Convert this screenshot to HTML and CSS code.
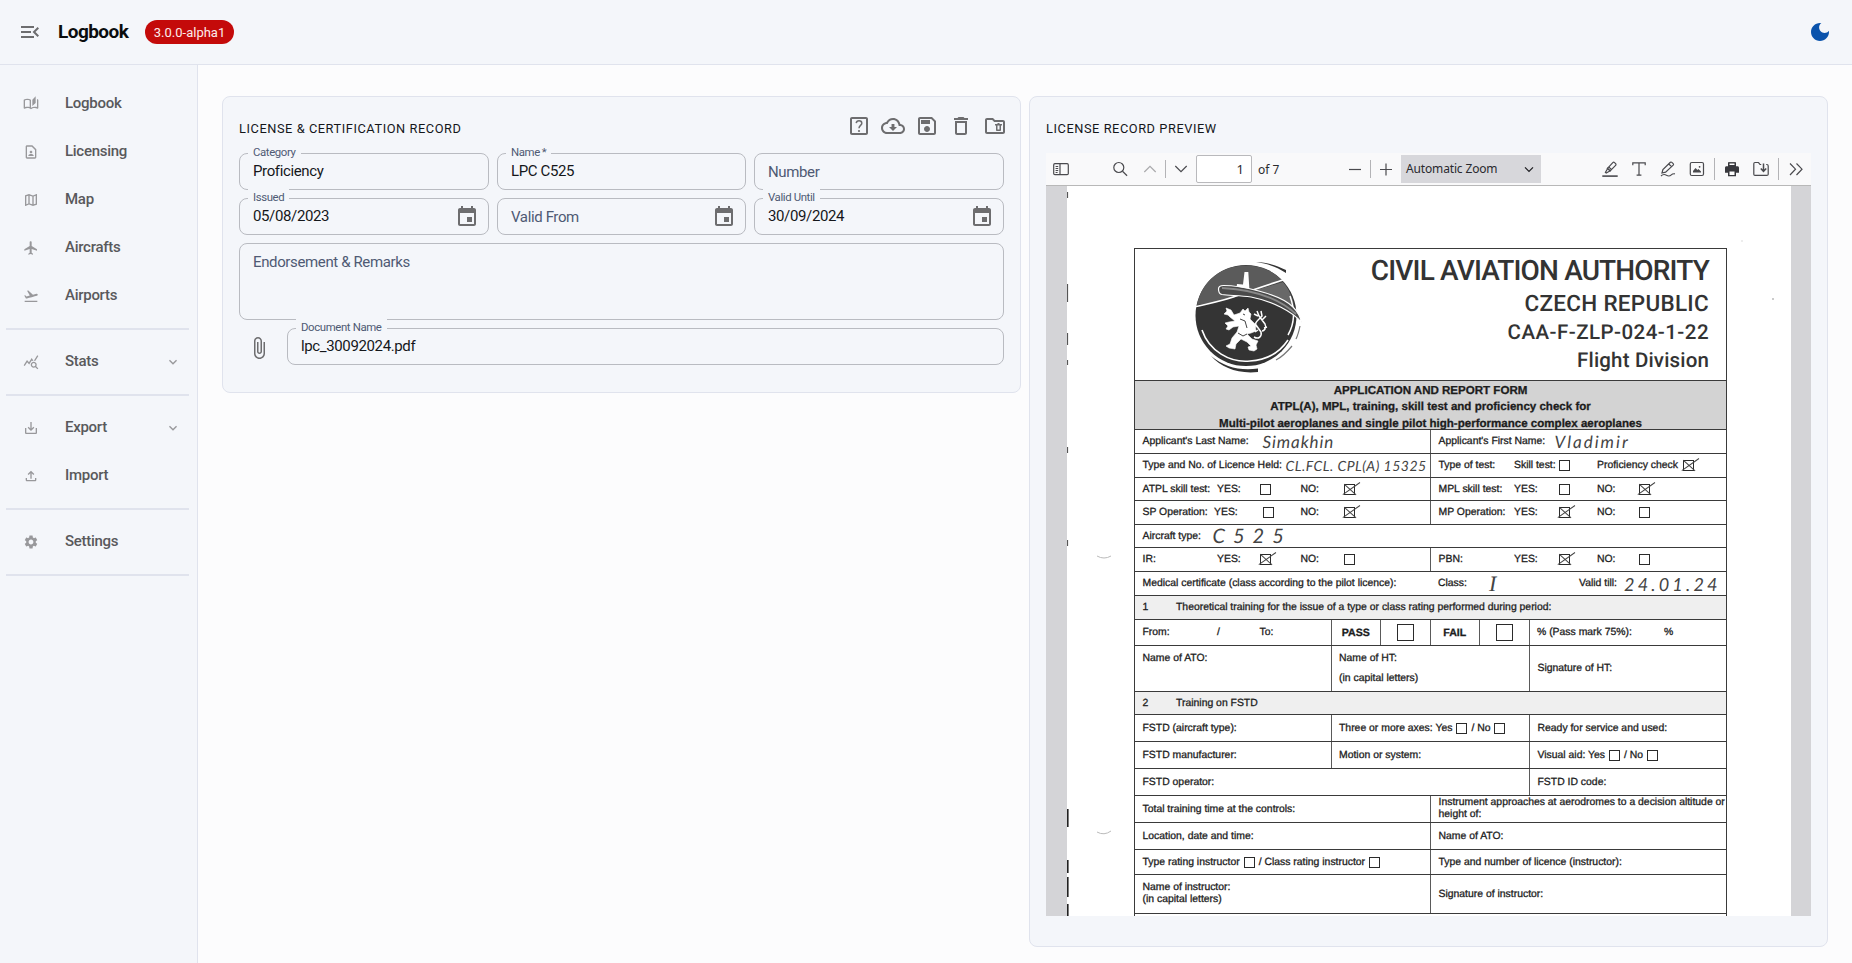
FILE: index.html
```html
<!DOCTYPE html>
<html lang="en">
<head>
<meta charset="utf-8">
<title>Logbook</title>
<link rel="stylesheet" href="styles.css">
</head>
<body>
<header class="topbar">
  <svg class="ic24 menu-toggle" viewBox="0 0 24 24"><path d="M3 18h13v-2H3v2zM3 13h10v-2H3v2zm0-7v2h13V6H3zm18 9.59L17.42 12 21 8.41 19.59 7l-5 5 5 5L21 15.59z"/></svg>
  <span class="brand">Logbook</span>
  <span class="chip">3.0.0-alpha1</span>
  <svg class="ic24 moon" viewBox="0 0 24 24"><path d="M12 3c-4.97 0-9 4.03-9 9s4.03 9 9 9 9-4.03 9-9c0-.46-.04-.92-.1-1.36-.98 1.37-2.58 2.26-4.4 2.26-2.98 0-5.4-2.42-5.4-5.4 0-1.81.89-3.42 2.26-4.4-.44-.06-.9-.1-1.36-.1z"/></svg>
</header>
<div class="shell">
  <nav class="sidebar">
    <a class="nav-item"><svg viewBox="0 0 24 24"><path d="M22.47 5.2c-.47-.24-.96-.44-1.47-.61v12.03c-1.14-.41-2.31-.62-3.5-.62-1.9 0-3.78.54-5.5 1.58V5.48C10.38 4.55 8.51 4 6.5 4c-1.79 0-3.48.44-4.97 1.2-.33.16-.53.51-.53.88v12.08c0 .58.47.99 1 .99.16 0 .32-.04.48-.12C3.69 18.4 5.05 18 6.5 18c2.07 0 3.98.82 5.5 2 1.52-1.18 3.43-2 5.5-2 1.45 0 2.81.4 4.02 1.04.16.08.32.12.48.12.52 0 1-.41 1-.99V6.08c0-.37-.2-.72-.53-.88zM10 16.62C8.86 16.21 7.69 16 6.5 16c-1.19 0-2.36.21-3.5.62V6.71C4.11 6.24 5.28 6 6.5 6c1.2 0 2.39.25 3.5.72v9.9zM19 .5l-5 5V15l5-4.5V.5z"/></svg><span>Logbook</span></a>
    <a class="nav-item"><svg viewBox="0 0 24 24"><path d="M13.17 4 18 8.83V20H6V4h7.17M14 2H6c-1.1 0-2 .9-2 2v16c0 1.1.9 2 2 2h12c1.1 0 2-.9 2-2V8l-6-6zm-2 12c1.1 0 2-.9 2-2s-.9-2-2-2-2 .9-2 2 .9 2 2 2zm4 3.43c0-.81-.48-1.53-1.22-1.85-.85-.37-1.79-.58-2.78-.58-.99 0-1.93.21-2.78.58C8.48 15.9 8 16.62 8 17.43V18h8v-.57z"/></svg><span>Licensing</span></a>
    <a class="nav-item"><svg viewBox="0 0 24 24"><path d="M20.5 3l-.16.03L15 5.1 9 3 3.36 4.9c-.21.07-.36.25-.36.48V20.5c0 .28.22.5.5.5l.16-.03L9 18.9l6 2.1 5.64-1.9c.21-.07.36-.25.36-.48V3.5c0-.28-.22-.5-.5-.5zM10 5.47l4 1.4v11.66l-4-1.4V5.47zm-5 .99l3-1.01v11.7l-3 1.16V6.46zm14 11.08l-3 1.01V6.86l3-1.16v11.84z"/></svg><span>Map</span></a>
    <a class="nav-item"><svg viewBox="0 0 24 24"><path d="M21 16v-2l-8-5V3.5c0-.83-.67-1.5-1.5-1.5S10 2.67 10 3.5V9l-8 5v2l8-2.5V19l-2 1.5V22l3.5-1 3.5 1v-1.5L13 19v-5.5l8 2.5z"/></svg><span>Aircrafts</span></a>
    <a class="nav-item"><svg viewBox="0 0 24 24"><path d="M2.5 19h19v2h-19v-2zm19.57-9.36c-.21-.8-1.04-1.28-1.84-1.06L14.92 10l-6.9-6.43-1.93.51 4.14 7.17-4.97 1.33-1.97-1.54-1.45.39 2.59 4.49s7.12-1.9 16.57-4.43c.81-.23 1.28-1.05 1.07-1.85z"/></svg><span>Airports</span></a>
    <hr>
    <a class="nav-item"><svg viewBox="0 0 24 24"><path d="M19.88 18.47c.44-.7.7-1.51.7-2.39 0-2.49-2.01-4.5-4.5-4.5s-4.5 2.01-4.5 4.5 2.01 4.5 4.49 4.5c.88 0 1.7-.26 2.39-.7L21.58 23 23 21.58l-3.12-3.11zm-3.8.11c-1.38 0-2.5-1.12-2.5-2.5s1.12-2.5 2.5-2.5 2.5 1.12 2.5 2.5-1.12 2.5-2.5 2.5zm-.36-8.5c-.74.02-1.45.18-2.1.45l-.55-.83-3.8 6.18-3.01-3.52-3.63 5.81L1 17l5-8 3 3.5L13 6l2.72 4.08zm2.59.5c-.64-.28-1.33-.45-2.05-.49L21.38 2 23 3.18l-4.69 7.4z"/></svg><span>Stats</span><svg class="chev" viewBox="0 0 24 24"><path d="M16.59 8.59 12 13.17 7.41 8.59 6 10l6 6 6-6z"/></svg></a>
    <hr>
    <a class="nav-item"><svg viewBox="0 0 24 24"><path d="M19 12v7H5v-7H3v7c0 1.1.9 2 2 2h14c1.1 0 2-.9 2-2v-7h-2zm-6 .67l2.59-2.58L17 11.5l-5 5-5-5 1.41-1.41L11 12.67V3h2v9.67z"/></svg><span>Export</span><svg class="chev" viewBox="0 0 24 24"><path d="M16.59 8.59 12 13.17 7.41 8.59 6 10l6 6 6-6z"/></svg></a>
    <a class="nav-item"><svg viewBox="0 0 24 24"><path d="M18 15v3H6v-3H4v3c0 1.1.9 2 2 2h12c1.1 0 2-.9 2-2v-3h-2zM7 9l1.41 1.41L11 7.83V16h2V7.83l2.59 2.58L17 9l-5-5-5 5z"/></svg><span>Import</span></a>
    <hr>
    <a class="nav-item"><svg viewBox="0 0 24 24"><path d="M19.14 12.94c.04-.3.06-.61.06-.94 0-.32-.02-.64-.07-.94l2.03-1.58c.18-.14.23-.41.12-.61l-1.92-3.32c-.12-.22-.37-.29-.59-.22l-2.39.96c-.5-.38-1.03-.7-1.62-.94l-.36-2.54c-.04-.24-.24-.41-.48-.41h-3.84c-.24 0-.43.17-.47.41l-.36 2.54c-.59.24-1.13.57-1.62.94l-2.39-.96c-.22-.08-.47 0-.59.22L2.74 8.87c-.12.21-.08.47.12.61l2.03 1.58c-.05.3-.09.63-.09.94s.02.64.07.94l-2.03 1.58c-.18.14-.23.41-.12.61l1.92 3.32c.12.22.37.29.59.22l2.39-.96c.5.38 1.03.7 1.62.94l.36 2.54c.05.24.24.41.48.41h3.84c.24 0 .44-.17.47-.41l.36-2.54c.59-.24 1.13-.56 1.62-.94l2.39.96c.22.08.47 0 .59-.22l1.92-3.32c.12-.22.07-.47-.12-.61l-2.01-1.58zM12 15.6c-1.98 0-3.6-1.62-3.6-3.6s1.62-3.6 3.6-3.6 3.6 1.62 3.6 3.6-1.62 3.6-3.6 3.6z"/></svg><span>Settings</span></a>
    <hr>
  </nav>
  <main class="content">
    <section class="card record">
      <div class="card-head">
        <h2>LICENSE &amp; CERTIFICATION RECORD</h2>
        <div class="actions">
          <svg class="ic24" viewBox="0 0 24 24"><path d="M19 3H5c-1.1 0-2 .9-2 2v14c0 1.1.9 2 2 2h14c1.1 0 2-.9 2-2V5c0-1.1-.9-2-2-2zm0 16H5V5h14v14z"/><circle cx="12" cy="17" r="1.1"/><path d="M9.2 9.1C9.4 7.600 10.500 6.700 12 6.700c1.600 0 2.800 1 2.800 2.500 0 2.200-2.800 2.300-2.800 5" fill="none" stroke="#6d6d6f" stroke-width="1.500"/></svg>
          <svg class="ic24" viewBox="0 0 24 24"><path d="M19.35 10.04C18.67 6.59 15.64 4 12 4 9.11 4 6.6 5.64 5.35 8.04 2.34 8.36 0 10.91 0 14c0 3.310 2.690 6 6 6h13c2.760 0 5-2.240 5-5 0-2.640-2.050-4.780-4.650-4.960zM19 18H6c-2.210 0-4-1.790-4-4 0-2.050 1.530-3.760 3.560-3.970l1.070-.11.5-.95C8.080 7.140 9.940 6 12 6c2.620 0 4.880 1.860 5.390 4.430l.3 1.500 1.530.11c1.560.1 2.780 1.410 2.780 2.960 0 1.650-1.350 3-3 3zm-5.550-8h-2.900v3H8l4 4 4-4h-2.550z"/></svg>
          <svg class="ic24" viewBox="0 0 24 24"><path d="M17 3H5c-1.110 0-2 .9-2 2v14c0 1.100.89 2 2 2h14c1.100 0 2-.9 2-2V7l-4-4zm2 16H5V5h11.170L19 7.830V19zm-7-7c-1.660 0-3 1.340-3 3s1.340 3 3 3 3-1.340 3-3-1.340-3-3-3zM6 6h9v4H6z"/></svg>
          <svg class="ic24" viewBox="0 0 24 24"><path d="M16 9v10H8V9h8m-1.500-6h-5l-1 1H5v2h14V4h-3.500l-1-1zM18 7H6v12c0 1.100.9 2 2 2h8c1.100 0 2-.9 2-2V7z"/></svg>
          <svg class="ic24" viewBox="0 0 24 24"><path d="M20 6h-8l-2-2H4c-1.100 0-2 .9-2 2v12c0 1.100.9 2 2 2h16c1.100 0 2-.9 2-2V8c0-1.100-.9-2-2-2zm0 12H4V6h5.170l2 2H20v10z"/><path d="M16.500 9h-2v1H12v1.500h1V16c0 .550.45 1 1 1h3c.55 0 1-.45 1-1v-4.500h1V10h-2.500V9zm0 6.500h-2v-4h2v4z"/></svg>
        </div>
      </div>
      <div class="grid3">
        <div class="field"><label>Category</label><span>Proficiency</span></div>
        <div class="field"><label>Name&thinsp;*</label><span>LPC C525</span></div>
        <div class="field empty"><span>Number</span></div>
        <div class="field"><label>Issued</label><span>05/08/2023</span><svg class="ic24" viewBox="0 0 24 24"><path d="M17 12h-5v5h5v-5zM16 1v2H8V1H6v2H5c-1.110 0-1.990.9-1.990 2L3 19c0 1.100.89 2 2 2h14c1.100 0 2-.9 2-2V5c0-1.100-.9-2-2-2h-1V1h-2zm3 18H5V8h14v11z"/></svg></div>
        <div class="field empty"><span>Valid From</span><svg class="ic24" viewBox="0 0 24 24"><path d="M17 12h-5v5h5v-5zM16 1v2H8V1H6v2H5c-1.110 0-1.990.9-1.990 2L3 19c0 1.100.89 2 2 2h14c1.100 0 2-.9 2-2V5c0-1.100-.9-2-2-2h-1V1h-2zm3 18H5V8h14v11z"/></svg></div>
        <div class="field"><label>Valid Until</label><span>30/09/2024</span><svg class="ic24" viewBox="0 0 24 24"><path d="M17 12h-5v5h5v-5zM16 1v2H8V1H6v2H5c-1.110 0-1.990.9-1.990 2L3 19c0 1.100.89 2 2 2h14c1.100 0 2-.9 2-2V5c0-1.100-.9-2-2-2h-1V1h-2zm3 18H5V8h14v11z"/></svg></div>
      </div>
      <div class="field empty remarks"><span>Endorsement &amp; Remarks</span></div>
      <div class="doc-row">
        <svg class="ic24" viewBox="0 0 24 24"><path d="M16.500 6v11.500c0 2.210-1.790 4-4 4s-4-1.790-4-4V5c0-1.380 1.120-2.500 2.500-2.500s2.500 1.120 2.500 2.500v10.500c0 .55-.45 1-1 1s-1-.45-1-1V6H10v9.500c0 1.380 1.120 2.500 2.500 2.500s2.500-1.120 2.500-2.500V5c0-2.210-1.790-4-4-4S7 2.790 7 5v12.500c0 3.040 2.460 5.500 5.500 5.500s5.500-2.460 5.500-5.500V6h-1.500z"/></svg>
        <div class="field"><label>Document Name</label><span>lpc_30092024.pdf</span></div>
      </div>
    </section>

    <section class="card preview">
      <div class="card-head"><h2>LICENSE RECORD PREVIEW</h2></div>
      <div class="viewer">
        <div class="toolbar">
          <svg class="tb i-side" viewBox="0 0 16 16"><rect x=".7" y="2.700" width="14.600" height="11" rx="1.200"/><path d="M7 2.700v11M2.600 5.500h2.600M2.600 7.500h2.600M2.600 9.500h2.600M2.600 11.500h2"/></svg>
          <svg class="tb i-find" viewBox="0 0 16 16"><circle cx="6.800" cy="6.500" r="5"/><path d="m10.500 10.300 4.600 4.500"/></svg>
          <svg class="tb i-up" viewBox="0 0 16 16"><path d="m2.300 11 5.700-5.700 5.700 5.700"/></svg>
          <i class="sep s1"></i>
          <svg class="tb i-down" viewBox="0 0 16 16"><path d="m2.300 5 5.700 5.700L13.700 5"/></svg>
          <span class="pagebox">1</span>
          <span class="of">of 7</span>
          <svg class="tb i-minus" viewBox="0 0 16 16"><path d="M2 8.500h12"/></svg>
          <i class="sep s2"></i>
          <svg class="tb i-plus" viewBox="0 0 16 16"><path d="M2 8.500h12M8 2.500v12"/></svg>
          <span class="zoom">Automatic Zoom<svg class="tb i-sel" viewBox="0 0 16 16"><path d="m4 6.300 4 4 4-4"/></svg></span>
          <svg class="tb i-hl" viewBox="0 0 16 16"><path d="M.3 15.100h15.400" stroke-width="1.600"/><path d="m5.500 7.300 5.300-5.700c.5-.5 1.200-.5 1.700 0l1.100 1.100c.5.500.5 1.200 0 1.700L8.100 9.900z"/><path d="M5.500 7.300 4.800 9 3.400 11.400l.8.600 2.300-1.300 1.600-.8z"/><path d="m6.900 6.100 2.800 2.700"/></svg>
          <svg class="tb i-text" viewBox="0 0 16 16"><path d="M1.800 4.200V1.800h12.400v2.400M8 1.800v12.400M5.600 14.200h4.800"/></svg>
          <svg class="tb i-ink" viewBox="0 0 16 16"><path d="M2 12l.9-3.500L10.400 1.300c.4-.4 1-.4 1.400 0l1.400 1.400c.4.400.4 1 0 1.400L5.600 11.200zM8.800 3l2.700 2.600"/><path d="M1 15c2-2 3.500-2 5.500-.700 2 1.200 3.500.8 4.800-.500 1-1 2-1.200 3.700-1"/></svg>
          <svg class="tb i-img" viewBox="0 0 16 16"><rect x="1.300" y="1.500" width="13.200" height="13" rx="1.500"/><path d="M4 11.500V10l2.500-3 2 2 1-1 2.500 2.500v1z" fill="#4a4a4e" stroke="none"/><circle cx="10.600" cy="5.800" r=".9" fill="#4a4a4e" stroke="none"/></svg>
          <i class="sep s3"></i>
          <svg class="tb i-print" viewBox="0 0 16 16"><path d="M4 1.200h8v4h1.500c.9 0 1.500.6 1.500 1.500v5H12v3.500H4v-3.500H1v-5c0-.9.6-1.500 1.500-1.500H4z" fill="#38383d" stroke="none"/><path d="M5 2h6v2.500H5zM5 10h6v4.500H5z" fill="#fff" stroke="#38383d" stroke-width="1"/></svg>
          <svg class="tb i-dl" viewBox="0 0 16 16"><path d="M6 2.200 5.400 1.500H2C1.300 1.500.8 2 .8 2.700v10.500c0 .7.500 1.200 1.200 1.200h11.800c.8 0 1.400-.5 1.400-1.200V5c0-1-.6-1.500-1.400-1.500h-.6M6 2.200l1 1.300h1.200"/><path d="M10.500 2.500V10M7.800 7.500l2.700 2.800 2.700-2.800" stroke-width="1.500"/></svg>
          <i class="sep s4"></i>
          <svg class="tb i-more" viewBox="0 0 16 16"><path d="m2 2.500 5.500 5.700L2 14M8.500 2.500 14 8.200 8.500 14"/></svg>
        </div>
        <div class="canvas">
          <div class="page">
            <svg class="scan-marks" viewBox="0 0 724 730"><path d="M.5 6v6M.5 98v18M.5 147v12M.5 174v5M.5 261v6M.5 354v6" stroke="#555" stroke-width="1.200"/><path d="M.8 623v18M.8 674v13M.8 691v20M.8 718v12" stroke="#222" stroke-width="1.600"/><path d="M30 370q7 4 14 0M30 646q7 4 14-1" fill="none" stroke="#bbb"/><circle cx="706" cy="113" r=".8" fill="#888"/><circle cx="675" cy="55" r=".7" fill="#ccc"/></svg>
            <div class="form">
              <div class="row r-title">
                <svg class="emblem" viewBox="0 0 110 118">
                  <circle cx="51" cy="57.500" r="50.500" fill="#343434"/>
                  <path d="M2 47C7 22 27 7.500 51 7.500c15 0 28 6 37 16L53 34C36 42 19 44 2 47z" fill="#5b5b5b"/>
                  <path d="M53 34 88 24c6 7 10 16 11 24C86 42 70 37 53 34z" fill="#686868"/>
                  <path d="M1 48.500C16 45 30 42.500 44 37S74 26.500 88 22" fill="none" stroke="#fff" stroke-width="1.600"/>
                  <path d="M41.500 29.500 42 26l6 .5L49.500 14h3.800L54.500 33z" fill="#fff"/>
                  <path d="M95 38c5 14 5 27-2 39" fill="none" stroke="#fff" stroke-width="1.500"/>
                  <path d="M7 72c7 21 28 33 48 31 17-1 30-9 38-21" fill="none" stroke="#fff" stroke-width="1.600"/>
                  <path d="M23.500 31c0-2.500 2-3.500 5-3.500C44 27.500 84 35 98 49c5 5 7.500 10 8.500 15.500C98 54 77 43 56 39 44 37.500 34 37.500 27 36.500c-2.500-.5-3.500-2.500-3.500-5.500z" fill="#4a4a4a" stroke="#fff" stroke-width="1.200"/>
                  <path d="M27 30c22 1 52 6 74 26" fill="none" stroke="#888" stroke-width="1.800"/>
                  <path d="M61 4c11 0 22 4 30 8v3c-9-6-19-9.500-30-11z" fill="#333"/>
                  <path d="M16 98c13 11 29 15 47 12.500v3.500C43 116 27 110 16 98z" fill="#333"/>
                  <path d="M105 68c-1 5-2 9-4 13M97 88c-5 6-10 11-16 14" fill="none" stroke="#777" stroke-width="1.200"/>
                  <g fill="#fff" stroke="#fff" stroke-linejoin="round">
                    <path d="m45 55 3-4 2 2 3-3 1 4 2 2-1 5 5 5 1 7-5 2-4 1 5 5 6 2-2 4 1 4-3 2-5-1-1-3 3-1-4-4-6-3-5 5-1 5-6-1-3-2 4-2 2-6 5-6 2-6-6 1-4 3-3-1 2-3-3-3 4-1 6-1-5-4-2-2-4-1 3-3-1-3 5 2 3 5z" stroke-width=".6"/>
                    <path d="M59 79c5 3 8-1 7-5l-5-7c-2-3 3-5 6-9l-1-5M62 53l2 5 6 8c2 4-1 7-3 7M59 56l4 2M71 58l-4 4M59 66l3 3M72 69l-3 1M60 74l3-2" fill="none" stroke-width="1.500"/>
                  </g>
                  <path d="m45 61 5 2 2 7M43 75l5 3 4-2M48 56l2 1" fill="none" stroke="#444" stroke-width="1"/>
                </svg>
                <div class="authority">
                  <p class="a1">CIVIL AVIATION AUTHORITY</p>
                  <p class="a2">CZECH REPUBLIC</p>
                  <p class="a3">CAA-F-ZLP-024-1-22</p>
                  <p class="a4">Flight Division</p>
                </div>
              </div>
              <div class="row r-heading">
                <p class="h1">APPLICATION AND REPORT FORM</p>
                <p class="h2">ATPL(A), MPL, training, skill test and proficiency check for</p>
                <p class="h3">Multi-pilot aeroplanes and single pilot high-performance complex aeroplanes</p>
              </div>
              <div class="row h24 half"><div class="cell"><span class="lbl-name">Applicant's Last Name:</span><span class="ink ink-last">Simakhin</span></div><div class="cell"><span class="lbl-first">Applicant's First Name:</span><span class="ink ink-first">Vladimir</span></div></div>
              <div class="row h24 half"><div class="cell"><span class="lbl-lic">Type and No. of Licence Held:</span><span class="ink ink-lic">CL.FCL. CPL(A) 15325</span></div><div class="cell rt"><span class="s-label">Type of test:</span><span class="s-yes">Skill test:</span><span class="s-box"><i class="box"></i></span><span class="s-prof">Proficiency check</span><i class="box x"></i></div></div>
              <div class="row h23 half"><div class="cell"><span class="s-label">ATPL skill test:</span><span class="s-yes">YES:</span><span class="s-box"><i class="box"></i></span><span class="s-no">NO:</span><i class="box x"></i></div><div class="cell rt"><span class="s-label">MPL skill test:</span><span class="s-yes">YES:</span><span class="s-box"><i class="box"></i></span><span class="s-no">NO:</span><i class="box x"></i></div></div>
              <div class="row h24 half"><div class="cell"><span class="s-label sp">SP Operation:</span><span class="s-yes sp">YES:</span><span class="s-box sp"><i class="box"></i></span><span class="s-no">NO:</span><i class="box x"></i></div><div class="cell rt"><span class="s-label">MP Operation:</span><span class="s-yes">YES:</span><span class="s-box"><i class="box x"></i></span><span class="s-no">NO:</span><i class="box"></i></div></div>
              <div class="row h23"><div class="cell"><span class="lbl-type">Aircraft type:</span><span class="ink ink-type">C525</span></div></div>
              <div class="row h24 half"><div class="cell"><span class="s-label">IR:</span><span class="s-yes">YES:</span><span class="s-box"><i class="box x"></i></span><span class="s-no">NO:</span><i class="box"></i></div><div class="cell rt"><span class="s-label">PBN:</span><span class="s-yes">YES:</span><span class="s-box"><i class="box x"></i></span><span class="s-no">NO:</span><i class="box"></i></div></div>
              <div class="row h24"><div class="cell"><span class="m-cert">Medical certificate (class according to the pilot licence):</span><span class="m-class">Class:</span><span class="ink ink-class">I</span><span class="m-till">Valid till:</span><span class="ink ink-till">24.01.24</span></div></div>
              <div class="row h24 shade"><div class="cell"><span class="num">1</span><span>Theoretical training for the issue of a type or class rating performed during period:</span></div></div>
              <div class="row h26 exam"><div class="cell"><span class="s-label">From:</span><span class="s-yes">/</span><span>To:</span></div><div class="cell mid"><b>PASS</b></div><div class="cell mid"><i class="box big"></i></div><div class="cell mid"><b>FAIL</b></div><div class="cell mid"><i class="box big"></i></div><div class="cell"><span class="pass">% (Pass mark 75%):</span><span>%</span></div></div>
              <div class="row h46 thirds"><div class="cell top"><span>Name of ATO:</span></div><div class="cell top"><span>Name of HT:<br>(in capital letters)</span></div><div class="cell sig"><span>Signature of HT:</span></div></div>
              <div class="row h23 shade"><div class="cell"><span class="num">2</span><span>Training on FSTD</span></div></div>
              <div class="row h27 thirds"><div class="cell"><span>FSTD (aircraft type):</span></div><div class="cell gap"><span>Three or more axes: Yes</span><i class="box"></i><span>/ No</span><i class="box"></i></div><div class="cell"><span>Ready for service and used:</span></div></div>
              <div class="row h27 thirds"><div class="cell"><span>FSTD manufacturer:</span></div><div class="cell"><span>Motion or system:</span></div><div class="cell gap"><span>Visual aid: Yes</span><i class="box"></i><span>/ No</span><i class="box"></i></div></div>
              <div class="row h27 wide"><div class="cell"><span>FSTD operator:</span></div><div class="cell"><span>FSTD ID code:</span></div></div>
              <div class="row h27 half"><div class="cell"><span>Total training time at the controls:</span></div><div class="cell tight"><span>Instrument approaches at aerodromes to a decision altitude or<br>height of:</span></div></div>
              <div class="row h27 half"><div class="cell"><span>Location, date and time:</span></div><div class="cell"><span>Name of ATO:</span></div></div>
              <div class="row h25 half"><div class="cell gap"><span>Type rating instructor</span><i class="box"></i><span>/ Class rating instructor</span><i class="box"></i></div><div class="cell"><span>Type and number of licence (instructor):</span></div></div>
              <div class="row h39 half"><div class="cell tight"><span>Name of instructor:<br>(in capital letters)</span></div><div class="cell"><span>Signature of instructor:</span></div></div>
              <div class="row rest"></div>
            </div>
          </div>
        </div>
      </div>
    </section>
  </main>
</div>
</body>
</html>
```
FILE: styles.css
```css
* { box-sizing: border-box; }
body { margin: 0; width: 1852px; height: 963px; overflow: hidden; background: #fcfcfd; font-family: Roboto, "Liberation Sans", sans-serif; color: #14161a; }
p, h2 { margin: 0; }
svg { flex: none; display: block; }
.ic24 { width: 24px; height: 24px; fill: #6d6d6f; }

.topbar { display: flex; align-items: center; height: 65px; padding: 0 20px 1px 18px; background: #f4f6fa; border-bottom: 1px solid #e0e3ed; }
.brand { margin: 0 16px 0 16px; font-size: 19px; line-height: 32px; font-weight: 700; letter-spacing: -.55px; color: #0b0d0e; width: 71px; white-space: nowrap; }
.chip { display: flex; align-items: center; justify-content: center; width: 89px; height: 24px; border-radius: 12px; background: #c40a0a; color: #fcecec; font-size: 13px; padding-top: 1px; }
.moon { margin-left: auto; fill: #0a53ac; }

.shell { display: flex; height: 898px; }
.sidebar { width: 198px; padding: 15px 0; background: #f4f6fa; border-right: 1px solid #e0e3ed; }
.nav-item { display: flex; align-items: center; height: 48px; padding: 0 16px 0 23px; font-size: 15px; font-weight: 500; letter-spacing: -.28px; color: #59595c; }
.nav-item svg { width: 16px; height: 16px; fill: #98989b; }
.nav-item span { margin: 0 auto 2px 26px; }
.sidebar hr { margin: 8px 8px 8px 6px; height: 2px; border: 0; background: #e0e3ed; }

.content { flex: 1; display: flex; align-items: flex-start; gap: 8px; padding: 31px 24px 0; }
.card { width: 799px; border: 1px solid #e0e3ed; border-radius: 8px; background: #f4f6fa; padding: 16px; }
.record { height: 297px; }
.preview { height: 851px; }
.card-head { display: flex; justify-content: space-between; height: 40px; }
.card-head h2 { font-size: 12.8px; font-weight: 400; letter-spacing: .56px; line-height: 32px; white-space: nowrap; }
.actions { display: flex; gap: 10px; margin: 1px -3px 0 0; }

.grid3 { display: grid; grid-template-columns: 250px 249px 250px; gap: 8px; }
.field { position: relative; display: flex; align-items: center; height: 37px; padding: 0 9px 2px 13px; border: 1px solid #b9bbc1; border-radius: 8px; font-size: 15px; letter-spacing: -.37px; white-space: nowrap; }
.field label { position: absolute; left: 8px; top: -10px; padding: 0 5px; line-height: 16px; font-size: 11.4px; letter-spacing: -.38px; color: #4f5a74; background: #f4f6fa; }
.field svg { margin: 0 0 -2px auto; }
.empty { color: #4f5a74; padding-bottom: 0; }
.empty svg { margin-bottom: 0; }
.remarks { margin-top: 8px; height: 77px; align-items: flex-start; padding-top: 9px; }
.doc-row { display: flex; align-items: center; gap: 16px; margin-top: 8px; padding-left: 8px; }
.doc-row .field { flex: 1; }
.doc-row > svg { margin-bottom: -2px; }

.viewer { height: 763px; display: flex; flex-direction: column; }
.toolbar { display: flex; align-items: center; flex: none; height: 33px; padding-left: 7px; background: #f9f9fa; border-bottom: 1px solid #b8b8b8; font-family: "Noto Sans", sans-serif; font-size: 12px; color: #2a2a2e; }
.tb { width: 16px; height: 16px; fill: none; stroke: #4a4a4e; stroke-width: 1.2; }
.i-find { margin-left: 43px; }
.i-up { margin-left: 14px; opacity: .45; }
.sep { width: 1px; height: 18px; background: #b3b3b6; flex: none; }
.s1 { margin-left: 7px; }
.i-down { margin-left: 7px; }
.pagebox { margin-left: 7px; width: 56px; height: 28px; border: 1px solid #b9b9bc; background: #fff; text-align: right; padding: 0 7px; line-height: 27px; font-size: 13px; border-radius: 2px; }
.of { margin-left: 6px; width: 89px; }
.s2 { margin-left: 7px; }
.i-plus { margin-left: 7px; }
.zoom { display: flex; align-items: center; justify-content: space-between; width: 140px; height: 28px; margin-left: 7px; padding: 0 4px 2px 5px; background: #d7d7db; letter-spacing: -.15px; white-space: nowrap; }
.i-sel { stroke: #1c1c1f; margin-bottom: -2px; }
.i-hl { margin-left: 61px; }
.i-text { margin-left: 13px; }
.i-ink { margin-left: 13px; }
.i-img { margin-left: 13px; }
.s3, .s4 { height: 22px; }
.s3 { margin-left: 9px; }
.i-print { margin-left: 9px; }
.i-dl { margin-left: 13px; }
.s4 { margin-left: 9px; }
.i-more { margin-left: 9px; }

.canvas { flex: 1; overflow: hidden; background: #d4d4d7; padding: 0 20px 0 21px; }
.page { position: relative; height: 730px; background: #fff; padding: 62px 64px 0 67px; overflow: hidden; }
.scan-marks { position: absolute; left: 0; top: 0; width: 724px; height: 730px; }
.form { width: 593px; border: solid #3a3a3a; border-width: 1px 1px 0 1px; font-family: "Liberation Sans", Arial, sans-serif; font-size: 10.42px; color: #1d1d1d; text-rendering: geometricPrecision; -webkit-text-stroke: .3px #1d1d1d; }
.row { display: flex; border-bottom: 1px solid #3a3a3a; white-space: nowrap; }
.h23 { height: 23px; } .h24 { height: 24px; } .h25 { height: 25px; } .h26 { height: 26px; } .h27 { height: 27px; } .h39 { height: 39px; } .h46 { height: 46px; }
.rest { height: 10px; border: 0; }
.cell { display: flex; align-items: center; padding-left: 7.5px; flex: none; border-left: 1px solid #5a5a5a; }
.cell:first-child { border-left: 0; }
.cell:last-child { flex: 1; }
.half > .cell:first-child { width: 295px; }
.wide > .cell:first-child { width: 394px; }
.thirds > .cell:first-child, .exam > .cell:first-child { width: 195.5px; }
.thirds > .cell:nth-child(2) { width: 198.500px; }
.exam > .mid { width: 49.500px; justify-content: center; padding: 0; }
.shade { background: #efefef; }
.num { width: 33.500px; }
.top { align-items: flex-start; padding-top: 3px; line-height: 19.500px; }
.tight { line-height: 11.700px; }
.gap { gap: 4px; }
.pass { width: 127px; }
b { font-size: 10.6px; }

.r-title { height: 132px; justify-content: space-between; }
.emblem { width: 110px; height: 118px; margin: 9px 0 0 60px; }
.authority { width: 340px; margin-right: 17px; display: flex; flex-direction: column; align-items: flex-end; font-family: Roboto, sans-serif; font-weight: 500; color: #333; -webkit-text-stroke: 0; }
.a1 { font-size: 28px; line-height: 33px; margin-top: 5px; letter-spacing: -.84px; }
.a2 { font-size: 22.5px; line-height: 28px; margin-top: 3px; letter-spacing: .28px; }
.a3 { font-size: 20.5px; line-height: 28px; margin-top: 1px; letter-spacing: .46px; }
.a4 { font-size: 20.5px; line-height: 28px; letter-spacing: .16px; }
.r-heading { height: 49px; flex-direction: column; align-items: center; background: #d3d3d3; font-weight: 700; font-size: 11.56px; line-height: 16.3px; padding-top: 2px; }

.s-label { width: 74.5px; } .s-yes { width: 42.5px; } .s-box { width: 41px; } .s-no { width: 43.5px; }
.s-label.sp { width: 71.5px; } .s-yes.sp { width: 48.5px; } .s-box.sp { width: 38px; }
.rt .s-label { width: 75.5px; } .rt .s-yes { width: 44.500px; } .rt .s-box { width: 38.5px; } .rt .s-no { width: 42px; } .s-prof { width: 85.500px; }
.box { position: relative; display: block; width: 11px; height: 11px; border: 1.4px solid #2b2b2b; flex: none; }
.big { width: 17px; height: 17px; }
.x::before, .x::after { content: ""; position: absolute; left: -3px; top: 4px; width: 16px; height: 1.400px; background: #444; transform: rotate(42deg); }
.x::after { left: -4px; width: 21px; top: 3px; transform: rotate(-35deg); }

.ink { font-family: Lato, sans-serif; font-style: italic; color: #444; -webkit-text-stroke: 0; line-height: 20px; font-size: 17px; }
.lbl-name { width: 120px; } .lbl-first { width: 116px; } .lbl-lic { width: 143px; } .lbl-type { width: 70px; }
.ink-last { letter-spacing: .9px; }
.ink-first { letter-spacing: 2px; }
.ink-lic { font-size: 14px; letter-spacing: .5px; }
.ink-type { font-size: 20px; letter-spacing: 8px; }
.m-cert { width: 295.500px; } .m-class { width: 51px; } .m-till { width: 45px; }
.ink-class { width: 90px; font-size: 22px; font-family: "Liberation Serif", serif; }
.ink-till { font-size: 18px; letter-spacing: 3.200px; }
```
